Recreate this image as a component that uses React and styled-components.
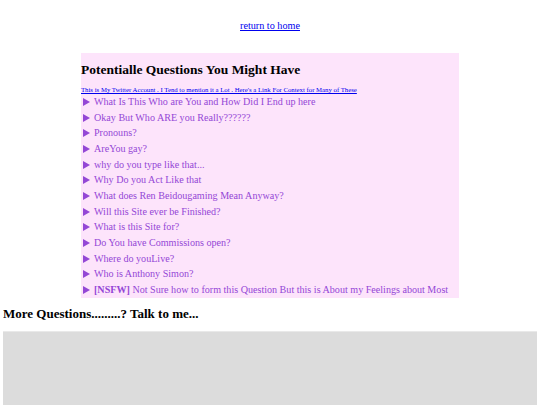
import React from "react";
import styled, { createGlobalStyle } from "styled-components";

const GlobalStyle = createGlobalStyle`
  html {
    overflow: hidden;
  }
  body {
    margin: 3px;
    background: #ffffff;
    font-family: "Liberation Serif", "Times New Roman", serif;
    color: #000000;
  }
`;

const HomeRow = styled.div`
  margin-top: 17px;
  text-align: center;
  font-size: 10.2px;
  line-height: 12px;
`;

const Link = styled.a`
  color: #0000ee;
  text-decoration: underline;
`;

const Card = styled.section`
  width: 378px;
  margin: 21px auto 0;
  padding-top: 9px;
  background: #fde4fb;
`;

const Heading = styled.h2`
  margin: 0;
  font-size: 13.5px;
  line-height: 16px;
  font-weight: bold;
`;

const SmallLink = styled(Link)`
  display: block;
  margin-top: 8px;
  font-size: 6.75px;
  line-height: 8px;
`;

const Question = styled.details`
  color: #9447d6;
  font-size: 10.1px;
  line-height: 15.67px;
`;

const Summary = styled.summary`
  display: block;
  list-style: none;
  cursor: pointer;

  &::-webkit-details-marker {
    display: none;
  }

  &::before {
    content: "";
    display: inline-block;
    width: 0;
    height: 0;
    margin: 0 4px 0 2px;
    border-left: 7px solid currentColor;
    border-top: 4px solid transparent;
    border-bottom: 4px solid transparent;
    vertical-align: -1px;
  }
`;

const Bold = styled.b`
  font-weight: bold;
`;

const Title = styled.h2`
  margin: 8px 0 0;
  font-size: 13px;
  line-height: 16px;
  font-weight: bold;
`;

const Frame = styled.div`
  margin-top: 9px;
  width: 560px;
  height: 160px;
  background: #dcdcdc;
  border-top: 1px solid #e9e9e9;
`;

const questions = [
  "What Is This Who are You and How Did I End up here",
  "Okay But Who ARE you Really??????",
  "Pronouns?",
  "AreYou gay?",
  "why do you type like that...",
  "Why Do you Act Like that",
  "What does Ren Beidougaming Mean Anyway?",
  "Will this Site ever be Finished?",
  "What is this Site for?",
  "Do You have Commissions open?",
  "Where do youLive?",
  "Who is Anthony Simon?",
];

export default function App() {
  return (
    <>
      <GlobalStyle />
      <HomeRow>
        <Link href="#">return to home</Link>
      </HomeRow>
      <Card>
        <Heading>Potentialle Questions You Might Have</Heading>
        <SmallLink href="#">
          This is My Twitter Account . I Tend to mention it a Lot . Here's a
          Link For Context for Many of These
        </SmallLink>
        {questions.map((q) => (
          <Question key={q}>
            <Summary>{q}</Summary>
          </Question>
        ))}
        <Question>
          <Summary>
            <Bold>[NSFW]</Bold> Not Sure how to form this Question But this is
            About my Feelings about Most
          </Summary>
        </Question>
      </Card>
      <Title>More Questions.........? Talk to me...</Title>
      <Frame />
    </>
  );
}
